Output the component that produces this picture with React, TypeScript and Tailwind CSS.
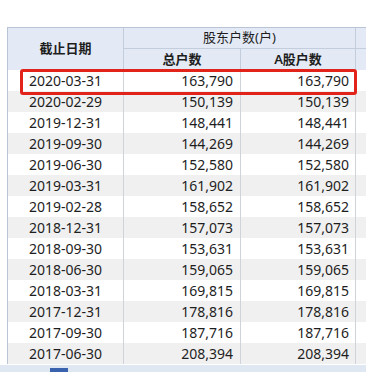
import React from "react";

const rows = [
  ["2020-03-31", "163,790", "163,790"],
  ["2020-02-29", "150,139", "150,139"],
  ["2019-12-31", "148,441", "148,441"],
  ["2019-09-30", "144,269", "144,269"],
  ["2019-06-30", "152,580", "152,580"],
  ["2019-03-31", "161,902", "161,902"],
  ["2019-02-28", "158,652", "158,652"],
  ["2018-12-31", "157,073", "157,073"],
  ["2018-09-30", "153,631", "153,631"],
  ["2018-06-30", "159,065", "159,065"],
  ["2018-03-31", "169,815", "169,815"],
  ["2017-12-31", "178,816", "178,816"],
  ["2017-09-30", "187,716", "187,716"],
  ["2017-06-30", "208,394", "208,394"],
];

export default function App() {
  return (
    <div
      className="relative w-[366px] h-[372px] overflow-hidden bg-white text-[#1e1e1e] text-[14px]"
      style={{ fontFamily: '"Noto Sans", "Noto Sans CJK SC", sans-serif' }}
    >
      <div className="pt-[27px] pl-[7px]">
        {/* Header */}
        <div className="flex w-[420px] h-[43px] bg-[#e3eaf5] border-t border-l border-[#b9c5d7] text-[13px]">
          <div className="w-[116px] shrink-0 flex items-center justify-center border-r border-[#c3cddc] font-semibold">
            截止日期
          </div>
          <div className="w-[232px] shrink-0 flex flex-col border-r border-[#c3cddc]">
            <div className="h-[21px] flex items-center justify-center border-b border-[#c3cddc]">
              股东户数(户)
            </div>
            <div className="flex flex-1">
              <div className="w-[117px] flex items-center justify-center border-r border-[#c3cddc] font-semibold">
                总户数
              </div>
              <div className="flex-1 flex items-center justify-center font-semibold">
                A股户数
              </div>
            </div>
          </div>
          <div className="flex-1 flex flex-col">
            <div className="h-[21px] border-b border-[#c3cddc]" />
          </div>
        </div>

        {/* Body */}
        <div className="w-[420px] border-l border-[#b9c5d7]">
          {rows.map((r, i) => (
            <div
              key={r[0]}
              className={`flex h-[21px] leading-[21px] ${i % 2 === 0 ? "bg-white" : "bg-[#f0f0f0]"}`}
            >
              <div className="w-[116px] shrink-0 text-center border-r border-[#cfd4db]">
                {r[0]}
              </div>
              <div className="w-[117px] shrink-0 text-right pr-[7px] border-r border-[#cfd4db]">
                {r[1]}
              </div>
              <div className="w-[115px] shrink-0 text-right pr-[6px] border-r border-[#cfd4db]">
                {r[2]}
              </div>
              <div className="flex-1" />
            </div>
          ))}
        </div>
      </div>

      {/* scrollbar strip */}
      <div className="mt-[1px] h-[8px] bg-[#dfe7f3] pl-[50px] pt-[3px]">
        <div className="w-[18px] h-full bg-[#3b62ad]" />
      </div>

      {/* highlight */}
      <div className="absolute left-[20px] top-[69px] w-[337px] h-[26px] border-[3px] border-[#e2231a] rounded-[3px]" />
    </div>
  );
}
